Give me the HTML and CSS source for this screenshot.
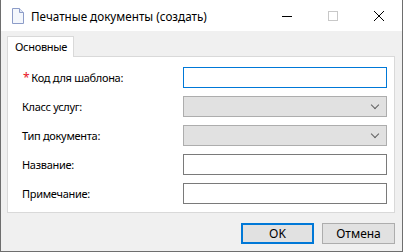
FILE: index.html
```html
<!DOCTYPE html>
<html lang="ru">
<head>
    <meta charset="UTF-8">
    <title>Печатные документы (создать)</title>
    <link rel="stylesheet" href="styles.css">
</head>
<body>
    <div class="window">
        <div class="titlebar">
            <svg class="doc-icon" width="12" height="16" viewBox="0 0 12 16">
                <path d="M0.5 0.5 H7.5 L11.5 4.5 V15.5 H0.5 Z" fill="#f4f7fc" stroke="#8c9cc8"/>
                <path d="M7.5 0.5 V4.5 H11.5" fill="#dfe6f4" stroke="#8c9cc8"/>
            </svg>
            <span class="title">Печатные документы (создать)</span>
            <div class="controls">
                <span class="ctl"><svg width="10" height="10" viewBox="0 0 10 10"><path d="M0 5.5 H10" stroke="#000"/></svg></span>
                <span class="ctl"><svg width="10" height="10" viewBox="0 0 10 10"><rect x="0.5" y="0.5" width="9" height="9" fill="none" stroke="#c8c8c8"/></svg></span>
                <span class="ctl"><svg width="10" height="10" viewBox="0 0 10 10"><path d="M0 0 L10 10 M10 0 L0 10" stroke="#000"/></svg></span>
            </div>
        </div>

        <div class="content">
            <div class="tabs">
                <div class="tab active">Основные</div>
            </div>
            <div class="panel">
                <div class="row">
                    <label class="label"><span class="req">*</span>Код для шаблона:</label>
                    <input class="field focused" type="text">
                </div>
                <div class="row">
                    <label class="label">Класс услуг:</label>
                    <div class="field select"><span class="chevron"></span></div>
                </div>
                <div class="row">
                    <label class="label">Тип документа:</label>
                    <div class="field select"><span class="chevron"></span></div>
                </div>
                <div class="row">
                    <label class="label">Название:</label>
                    <input class="field" type="text">
                </div>
                <div class="row">
                    <label class="label">Примечание:</label>
                    <input class="field" type="text">
                </div>
            </div>
            <div class="buttons">
                <button class="btn default">OK</button>
                <button class="btn">Отмена</button>
            </div>
        </div>
    </div>
</body>
</html>
```

FILE: styles.css
```css
body {
    margin: 0;
    padding: 0;
    font-family: "Noto Sans", "Liberation Sans", sans-serif;
    font-size: 11px;
    color: #000;
    background-color: #ffffff;
}

.window {
    width: 401px;
    height: 251px;
    border: 1px solid #6e6e6e;
    border-top: none;
    display: flex;
    flex-direction: column;
}

.titlebar {
    height: 31px;
    background-color: white;
    display: flex;
    align-items: center;
}

.doc-icon {
    margin-left: 11px;
}

.title {
    margin-left: 7px;
    font-size: 11.7px;
}

.controls {
    margin-left: auto;
    display: flex;
}

.ctl {
    width: 46px;
    height: 30px;
    display: flex;
    align-items: center;
    justify-content: center;
}

.content {
    flex: 1;
    background-color: #f0f0f0;
    padding: 5px 7px 0 6px;
    display: flex;
    flex-direction: column;
}

.tabs {
    display: flex;
    height: 20px;
    position: relative;
    z-index: 1;
}

.tab {
    padding: 0 0 0 7px;
    border: 1px solid #d9d9d9;
    border-bottom: none;
    background-color: white;
    line-height: 20px;
    height: 21px;
    box-sizing: border-box;
    width: 67px;
    letter-spacing: -0.3px;
}

.panel {
    background-color: white;
    border: 1px solid #d9d9d9;
    padding: 10px 7px 8px 14px;
    display: flex;
    flex-direction: column;
    gap: 8px;
}

.row {
    display: flex;
    align-items: center;
    height: 21px;
}

.label {
    width: 161px;
    white-space: nowrap;
    letter-spacing: -0.3px;
}

.req {
    color: #e81123;
    font-size: 12px;
    margin: 0 2px 0 1px;
}

.field {
    width: 204px;
    height: 21px;
    box-sizing: border-box;
    border: 1px solid #7a7a7a;
    background-color: white;
    margin: 0;
    padding: 0 3px;
    font: inherit;
    outline: none;
}

.field.focused {
    border-color: #0078d7;
}

.select {
    background-color: #e1e1e1;
    border-color: #adadad;
    display: flex;
    align-items: center;
    justify-content: flex-end;
}

.chevron {
    width: 5px;
    height: 5px;
    border-right: 1px solid #606060;
    border-bottom: 1px solid #606060;
    transform: rotate(45deg);
    margin: -3px 5px 0 0;
}

.buttons {
    display: flex;
    justify-content: flex-end;
    gap: 8px;
    margin-top: 10px;
}

.btn {
    width: 73px;
    height: 21px;
    box-sizing: border-box;
    background-color: #e1e1e1;
    border: 1px solid #adadad;
    font: inherit;
    font-size: 12px;
    color: #000;
    padding: 0;
}

.btn.default {
    border: 2px solid #0078d7;
}
```
